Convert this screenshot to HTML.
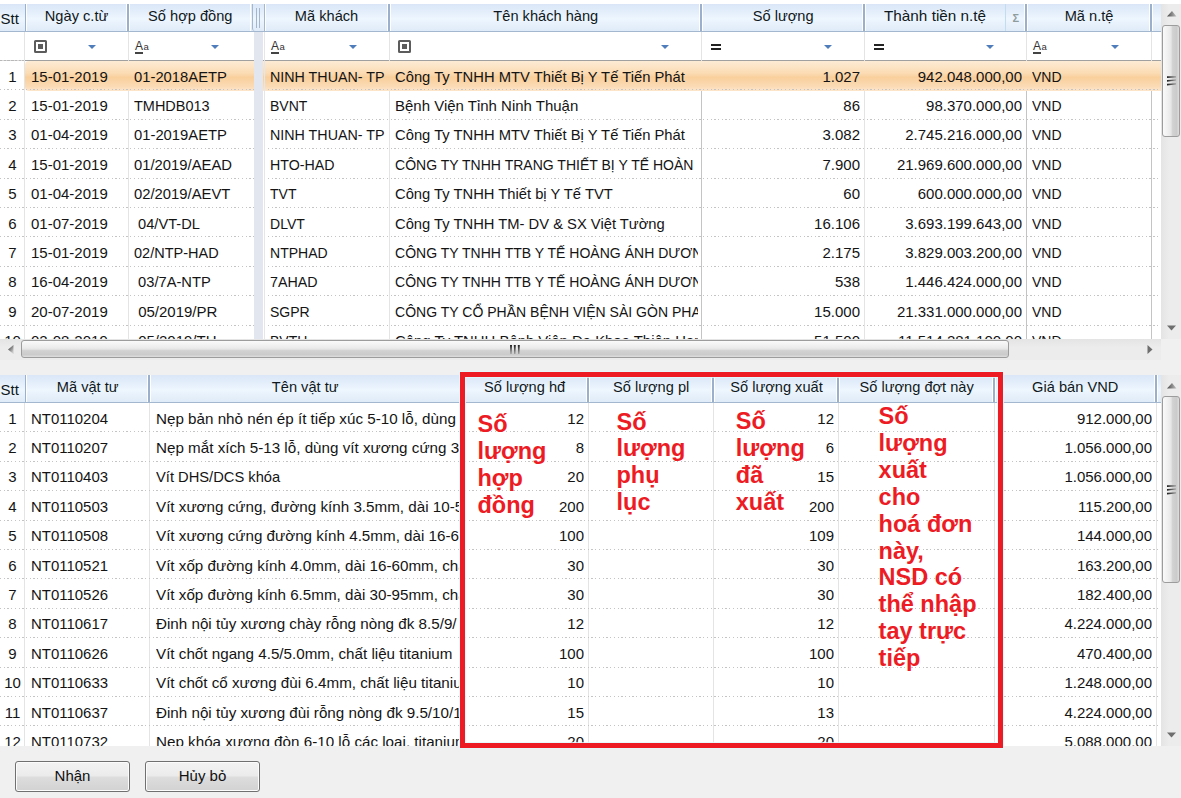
<!DOCTYPE html><html><head><meta charset='utf-8'><style>
*{margin:0;padding:0;box-sizing:border-box}
html,body{width:1181px;height:798px;overflow:hidden;background:#fff;font-family:"Liberation Sans",sans-serif}
.ab{position:absolute}
.hdr{position:absolute;background:linear-gradient(#dae6f7 0%,#e6f0fc 35%,#eef6fe 55%,#dfebf8 100%);}
.hb{position:absolute;height:1px;background:#a3b7cf}
.sep{position:absolute;width:2px;background:#9bb1cb}
.sepw{position:absolute;width:1px;background:#fff}
.ht{position:absolute;font-size:15px;color:#101820;white-space:nowrap;line-height:24px;text-align:center}
.cell{position:absolute;font-size:15px;color:#141414;white-space:pre;overflow:hidden;line-height:29.4px}
.vl{position:absolute;width:1px;background:#e4e4e4}
.dl{position:absolute;height:1px;background:repeating-linear-gradient(90deg,#c4c4c4 0 1.3px,transparent 1.3px 3.72px)}
.tri{position:absolute;width:0;height:0;border-left:4.5px solid transparent;border-right:4.5px solid transparent;border-top:4.5px solid #4f7cba}
.sb{position:absolute;background:linear-gradient(90deg,#e4e4e4,#ececec 40%,#ececec)}
.thumbv{position:absolute;border:1.4px solid #9c9c9c;border-radius:3px;background:linear-gradient(90deg,#fafafa 0%,#ececec 40%,#e6e6e6 50%,#d2d2d2 60%,#cbcbcb 85%,#dedede 100%)}
.thumbh{position:absolute;border:1.4px solid #9c9c9c;border-radius:3px;background:linear-gradient(#fafafa 0%,#ececec 40%,#e6e6e6 50%,#d2d2d2 60%,#cbcbcb 85%,#dedede 100%)}
.btn{position:absolute;border:1.4px solid #707070;border-radius:3px;background:linear-gradient(#f3f3f3 0%,#ebebeb 48%,#dddddd 52%,#d2d2d2 100%);box-shadow:inset 0 0 0 1px #fcfcfc;font-size:15px;color:#111;text-align:center;line-height:28px}
.ann{position:absolute;color:#ed1c24;font-weight:bold;font-size:23.5px;line-height:26.85px;white-space:pre}
</style></head><body>
<div class='ab' style='left:0;top:4px;width:1161px;height:335px;background:#fff;overflow:hidden'>
<div class='hdr' style='left:0;top:0;width:1161px;height:27px'></div>
<div class='hb' style='left:0;top:27px;width:1161px'></div>
<div class='ab' style='left:25px;top:56px;width:1136px;height:1px;background:#a0a0a0'></div>
<div class='dl' style='left:0;top:56px;width:25px;background:repeating-linear-gradient(90deg,#b8b8b8 0 2.5px,#d8d8d8 2.5px 3.72px)'></div>
<div class='vl' style='left:24px;top:28px;height:335px'></div>
<div class='vl' style='left:128px;top:28px;height:335px'></div>
<div class='vl' style='left:389px;top:28px;height:335px'></div>
<div class='vl' style='left:701px;top:28px;height:335px'></div>
<div class='vl' style='left:864px;top:28px;height:335px'></div>
<div class='vl' style='left:1026px;top:28px;height:335px'></div>
<div class='vl' style='left:1151px;top:28px;height:335px'></div>
<div class='ab' style='left:701px;top:57px;width:1.2px;height:279px;background:#c4c4c4'></div>
<div class='ab' style='left:1026px;top:57px;width:1.2px;height:279px;background:#c4c4c4'></div>
<div class='ab' style='left:1151px;top:57px;width:1.2px;height:279px;background:#c4c4c4'></div>
<div class='ab' style='left:25px;top:57.0px;width:1136px;height:29.9px;border-radius:4px 0 0 4px;background:linear-gradient(#fdebd5 0%,#fbdcb4 40%,#f9cf9c 55%,#fbdbb6 85%,#fde6cc 100%)'></div>
<div class='dl' style='left:0;top:85.4px;width:1161px'></div>
<div class='cell' style='left:0px;width:25px;text-align:center;top:57.5px;height:29.4px'>1</div>
<div class='cell' style='left:31px;width:94px;top:57.5px;height:29.4px'>15-01-2019</div>
<div class='cell' style='left:134px;width:117px;top:57.5px;height:29.4px'><span style='display:inline-block;transform:scaleX(0.986);transform-origin:left'>01-2018AETP</span></div>
<div class='cell' style='left:270px;width:116px;top:57.5px;height:29.4px'><span style='display:inline-block;transform:scaleX(0.952);transform-origin:left'>NINH THUAN- TP</span></div>
<div class='cell' style='left:395px;width:303px;top:57.5px;height:29.4px'><span style='display:inline-block;transform:scaleX(0.985);transform-origin:left'>Công Ty TNHH MTV Thiết Bị Y Tế Tiến Phát</span></div>
<div class='cell' style='left:702px;width:158px;text-align:right;top:57.5px;height:29.4px'>1.027</div>
<div class='cell' style='left:865px;width:157px;text-align:right;top:57.5px;height:29.4px'>942.048.000,00</div>
<div class='cell' style='left:1032px;width:116px;top:57.5px;height:29.4px'><span style='display:inline-block;transform:scaleX(0.935);transform-origin:left'>VND</span></div>
<div class='dl' style='left:0;top:114.8px;width:1161px'></div>
<div class='cell' style='left:0px;width:25px;text-align:center;top:86.9px;height:29.4px'>2</div>
<div class='cell' style='left:31px;width:94px;top:86.9px;height:29.4px'>15-01-2019</div>
<div class='cell' style='left:134px;width:117px;top:86.9px;height:29.4px'><span style='display:inline-block;transform:scaleX(0.965);transform-origin:left'>TMHDB013</span></div>
<div class='cell' style='left:270px;width:116px;top:86.9px;height:29.4px'><span style='display:inline-block;transform:scaleX(0.935);transform-origin:left'>BVNT</span></div>
<div class='cell' style='left:395px;width:303px;top:86.9px;height:29.4px'><span style='display:inline-block;transform:scaleX(0.999);transform-origin:left'>Bệnh Viện Tỉnh Ninh Thuận</span></div>
<div class='cell' style='left:702px;width:158px;text-align:right;top:86.9px;height:29.4px'>86</div>
<div class='cell' style='left:865px;width:157px;text-align:right;top:86.9px;height:29.4px'>98.370.000,00</div>
<div class='cell' style='left:1032px;width:116px;top:86.9px;height:29.4px'><span style='display:inline-block;transform:scaleX(0.935);transform-origin:left'>VND</span></div>
<div class='dl' style='left:0;top:144.2px;width:1161px'></div>
<div class='cell' style='left:0px;width:25px;text-align:center;top:116.3px;height:29.4px'>3</div>
<div class='cell' style='left:31px;width:94px;top:116.3px;height:29.4px'>01-04-2019</div>
<div class='cell' style='left:134px;width:117px;top:116.3px;height:29.4px'><span style='display:inline-block;transform:scaleX(0.986);transform-origin:left'>01-2019AETP</span></div>
<div class='cell' style='left:270px;width:116px;top:116.3px;height:29.4px'><span style='display:inline-block;transform:scaleX(0.952);transform-origin:left'>NINH THUAN- TP</span></div>
<div class='cell' style='left:395px;width:303px;top:116.3px;height:29.4px'><span style='display:inline-block;transform:scaleX(0.985);transform-origin:left'>Công Ty TNHH MTV Thiết Bị Y Tế Tiến Phát</span></div>
<div class='cell' style='left:702px;width:158px;text-align:right;top:116.3px;height:29.4px'>3.082</div>
<div class='cell' style='left:865px;width:157px;text-align:right;top:116.3px;height:29.4px'>2.745.216.000,00</div>
<div class='cell' style='left:1032px;width:116px;top:116.3px;height:29.4px'><span style='display:inline-block;transform:scaleX(0.935);transform-origin:left'>VND</span></div>
<div class='dl' style='left:0;top:173.6px;width:1161px'></div>
<div class='cell' style='left:0px;width:25px;text-align:center;top:145.7px;height:29.4px'>4</div>
<div class='cell' style='left:31px;width:94px;top:145.7px;height:29.4px'>15-01-2019</div>
<div class='cell' style='left:134px;width:117px;top:145.7px;height:29.4px'><span style='display:inline-block;transform:scaleX(0.988);transform-origin:left'>01/2019/AEAD</span></div>
<div class='cell' style='left:270px;width:116px;top:145.7px;height:29.4px'><span style='display:inline-block;transform:scaleX(0.946);transform-origin:left'>HTO-HAD</span></div>
<div class='cell' style='left:395px;width:303px;top:145.7px;height:29.4px'><span style='display:inline-block;transform:scaleX(0.935);transform-origin:left'>CÔNG TY TNHH TRANG THIẾT BỊ Y TẾ HOÀN</span></div>
<div class='cell' style='left:702px;width:158px;text-align:right;top:145.7px;height:29.4px'>7.900</div>
<div class='cell' style='left:865px;width:157px;text-align:right;top:145.7px;height:29.4px'>21.969.600.000,00</div>
<div class='cell' style='left:1032px;width:116px;top:145.7px;height:29.4px'><span style='display:inline-block;transform:scaleX(0.935);transform-origin:left'>VND</span></div>
<div class='dl' style='left:0;top:203.0px;width:1161px'></div>
<div class='cell' style='left:0px;width:25px;text-align:center;top:175.1px;height:29.4px'>5</div>
<div class='cell' style='left:31px;width:94px;top:175.1px;height:29.4px'>01-04-2019</div>
<div class='cell' style='left:134px;width:117px;top:175.1px;height:29.4px'><span style='display:inline-block;transform:scaleX(0.988);transform-origin:left'>02/2019/AEVT</span></div>
<div class='cell' style='left:270px;width:116px;top:175.1px;height:29.4px'><span style='display:inline-block;transform:scaleX(0.935);transform-origin:left'>TVT</span></div>
<div class='cell' style='left:395px;width:303px;top:175.1px;height:29.4px'><span style='display:inline-block;transform:scaleX(0.983);transform-origin:left'>Công Ty TNHH Thiết bị Y Tế TVT</span></div>
<div class='cell' style='left:702px;width:158px;text-align:right;top:175.1px;height:29.4px'>60</div>
<div class='cell' style='left:865px;width:157px;text-align:right;top:175.1px;height:29.4px'>600.000.000,00</div>
<div class='cell' style='left:1032px;width:116px;top:175.1px;height:29.4px'><span style='display:inline-block;transform:scaleX(0.935);transform-origin:left'>VND</span></div>
<div class='dl' style='left:0;top:232.4px;width:1161px'></div>
<div class='cell' style='left:0px;width:25px;text-align:center;top:204.5px;height:29.4px'>6</div>
<div class='cell' style='left:31px;width:94px;top:204.5px;height:29.4px'>01-07-2019</div>
<div class='cell' style='left:134px;width:117px;top:204.5px;height:29.4px'><span style='display:inline-block;transform:scaleX(0.975);transform-origin:left'> 04/VT-DL</span></div>
<div class='cell' style='left:270px;width:116px;top:204.5px;height:29.4px'><span style='display:inline-block;transform:scaleX(0.935);transform-origin:left'>DLVT</span></div>
<div class='cell' style='left:395px;width:303px;top:204.5px;height:29.4px'><span style='display:inline-block;transform:scaleX(0.983);transform-origin:left'>Công Ty TNHH TM- DV &amp; SX Việt Tường</span></div>
<div class='cell' style='left:702px;width:158px;text-align:right;top:204.5px;height:29.4px'>16.106</div>
<div class='cell' style='left:865px;width:157px;text-align:right;top:204.5px;height:29.4px'>3.693.199.643,00</div>
<div class='cell' style='left:1032px;width:116px;top:204.5px;height:29.4px'><span style='display:inline-block;transform:scaleX(0.935);transform-origin:left'>VND</span></div>
<div class='dl' style='left:0;top:261.8px;width:1161px'></div>
<div class='cell' style='left:0px;width:25px;text-align:center;top:233.9px;height:29.4px'>7</div>
<div class='cell' style='left:31px;width:94px;top:233.9px;height:29.4px'>15-01-2019</div>
<div class='cell' style='left:134px;width:117px;top:233.9px;height:29.4px'><span style='display:inline-block;transform:scaleX(0.967);transform-origin:left'>02/NTP-HAD</span></div>
<div class='cell' style='left:270px;width:116px;top:233.9px;height:29.4px'><span style='display:inline-block;transform:scaleX(0.935);transform-origin:left'>NTPHAD</span></div>
<div class='cell' style='left:395px;width:303px;top:233.9px;height:29.4px'><span style='display:inline-block;transform:scaleX(0.935);transform-origin:left'>CÔNG TY TNHH TTB Y TẾ HOÀNG ÁNH DƯƠNG</span></div>
<div class='cell' style='left:702px;width:158px;text-align:right;top:233.9px;height:29.4px'>2.175</div>
<div class='cell' style='left:865px;width:157px;text-align:right;top:233.9px;height:29.4px'>3.829.003.200,00</div>
<div class='cell' style='left:1032px;width:116px;top:233.9px;height:29.4px'><span style='display:inline-block;transform:scaleX(0.935);transform-origin:left'>VND</span></div>
<div class='dl' style='left:0;top:291.2px;width:1161px'></div>
<div class='cell' style='left:0px;width:25px;text-align:center;top:263.3px;height:29.4px'>8</div>
<div class='cell' style='left:31px;width:94px;top:263.3px;height:29.4px'>16-04-2019</div>
<div class='cell' style='left:134px;width:117px;top:263.3px;height:29.4px'><span style='display:inline-block;transform:scaleX(0.979);transform-origin:left'> 03/7A-NTP</span></div>
<div class='cell' style='left:270px;width:116px;top:263.3px;height:29.4px'><span style='display:inline-block;transform:scaleX(0.951);transform-origin:left'>7AHAD</span></div>
<div class='cell' style='left:395px;width:303px;top:263.3px;height:29.4px'><span style='display:inline-block;transform:scaleX(0.935);transform-origin:left'>CÔNG TY TNHH TTB Y TẾ HOÀNG ÁNH DƯƠNG</span></div>
<div class='cell' style='left:702px;width:158px;text-align:right;top:263.3px;height:29.4px'>538</div>
<div class='cell' style='left:865px;width:157px;text-align:right;top:263.3px;height:29.4px'>1.446.424.000,00</div>
<div class='cell' style='left:1032px;width:116px;top:263.3px;height:29.4px'><span style='display:inline-block;transform:scaleX(0.935);transform-origin:left'>VND</span></div>
<div class='dl' style='left:0;top:320.6px;width:1161px'></div>
<div class='cell' style='left:0px;width:25px;text-align:center;top:292.7px;height:29.4px'>9</div>
<div class='cell' style='left:31px;width:94px;top:292.7px;height:29.4px'>20-07-2019</div>
<div class='cell' style='left:134px;width:117px;top:292.7px;height:29.4px'><span style='display:inline-block;transform:scaleX(0.999);transform-origin:left'> 05/2019/PR</span></div>
<div class='cell' style='left:270px;width:116px;top:292.7px;height:29.4px'><span style='display:inline-block;transform:scaleX(0.935);transform-origin:left'>SGPR</span></div>
<div class='cell' style='left:395px;width:303px;top:292.7px;height:29.4px'><span style='display:inline-block;transform:scaleX(0.935);transform-origin:left'>CÔNG TY CỔ PHẦN BỆNH VIỆN SÀI GÒN PHA</span></div>
<div class='cell' style='left:702px;width:158px;text-align:right;top:292.7px;height:29.4px'>15.000</div>
<div class='cell' style='left:865px;width:157px;text-align:right;top:292.7px;height:29.4px'>21.331.000.000,00</div>
<div class='cell' style='left:1032px;width:116px;top:292.7px;height:29.4px'><span style='display:inline-block;transform:scaleX(0.935);transform-origin:left'>VND</span></div>
<div class='dl' style='left:0;top:350.0px;width:1161px'></div>
<div class='cell' style='left:0px;width:25px;text-align:center;top:322.1px;height:29.4px'>10</div>
<div class='cell' style='left:31px;width:94px;top:322.1px;height:29.4px'>02-08-2019</div>
<div class='cell' style='left:134px;width:117px;top:322.1px;height:29.4px'><span style='display:inline-block;transform:scaleX(0.999);transform-origin:left'> 05/2019/TH</span></div>
<div class='cell' style='left:270px;width:116px;top:322.1px;height:29.4px'><span style='display:inline-block;transform:scaleX(0.935);transform-origin:left'>BVTH</span></div>
<div class='cell' style='left:395px;width:303px;top:322.1px;height:29.4px'><span style='display:inline-block;transform:scaleX(0.992);transform-origin:left'>Công Ty TNHH Bệnh Viện Đa Khoa Thiện Hạnh</span></div>
<div class='cell' style='left:702px;width:158px;text-align:right;top:322.1px;height:29.4px'>51.500</div>
<div class='cell' style='left:865px;width:157px;text-align:right;top:322.1px;height:29.4px'>11.514.281.100,00</div>
<div class='cell' style='left:1032px;width:116px;top:322.1px;height:29.4px'><span style='display:inline-block;transform:scaleX(0.935);transform-origin:left'>VND</span></div>
<div class='ab' style='left:254px;top:28px;width:9px;height:335px;background:#e2e6ee'></div>
<div class='ab' style='left:264px;top:28px;width:1px;height:335px;background:#e6e6e6'></div>
<div class='ht' style='left:0.5px;top:2.5px;text-align:left'>Stt</div>
<div class='sep' style='left:24.5px;width:1.5px;top:0;height:27px'></div>
<div class='sepw' style='left:26px;top:0;height:27px'></div>
<div class='ht' style='left:26px;width:102px;top:0'><span style='display:inline-block;transform:scaleX(0.975)'>Ngày c.từ</span></div>
<div class='sepw' style='left:126px;top:0;height:27px'></div>
<div class='sep' style='left:127px;top:0;height:27px'></div>
<div class='sepw' style='left:129px;top:0;height:27px'></div>
<div class='ht' style='left:129px;width:122px;top:0'><span style='display:inline-block;transform:scaleX(0.975)'>Số hợp đồng</span></div>
<div class='ht' style='left:265px;width:124px;top:0'><span style='display:inline-block;transform:scaleX(0.975)'>Mã khách</span></div>
<div class='sepw' style='left:387px;top:0;height:27px'></div>
<div class='sep' style='left:388px;top:0;height:27px'></div>
<div class='sepw' style='left:390px;top:0;height:27px'></div>
<div class='ht' style='left:390px;width:311px;top:0'><span style='display:inline-block;transform:scaleX(0.975)'>Tên khách hàng</span></div>
<div class='sepw' style='left:699px;top:0;height:27px'></div>
<div class='sep' style='left:700px;top:0;height:27px'></div>
<div class='sepw' style='left:702px;top:0;height:27px'></div>
<div class='ht' style='left:702px;width:162px;top:0'><span style='display:inline-block;transform:scaleX(0.975)'>Số lượng</span></div>
<div class='sepw' style='left:862px;top:0;height:27px'></div>
<div class='sep' style='left:863px;top:0;height:27px'></div>
<div class='sepw' style='left:865px;top:0;height:27px'></div>
<div class='ht' style='left:865px;width:140px;top:0'><span style='display:inline-block;transform:scaleX(1.02)'>Thành tiền n.tệ</span></div>
<div class='ab' style='left:1005px;top:0;width:1px;height:27px;background:#c4dcef'></div>
<div class='ab' style='left:1012.5px;top:0;font-size:11px;font-weight:bold;line-height:29px;color:#8f9c9e'>&#931;</div>
<div class='sepw' style='left:1024px;top:0;height:27px'></div>
<div class='sep' style='left:1025px;top:0;height:27px'></div>
<div class='sepw' style='left:1027px;top:0;height:27px'></div>
<div class='ht' style='left:1027px;width:124px;top:0'><span style='display:inline-block;transform:scaleX(0.975)'>Mã n.tệ</span></div>
<div class='sepw' style='left:1149px;top:0;height:27px'></div>
<div class='sep' style='left:1150px;top:0;height:27px'></div>
<div class='sepw' style='left:1152px;top:0;height:27px'></div>
<div class='sepw' style='left:250px;top:0;height:27px'></div>
<div class='ab' style='left:251.5px;top:0;width:13.5px;height:27px;border-left:1.3px solid #a3b7cf;border-right:1.3px solid #a3b7cf;border-radius:0 0 0 3px;background:linear-gradient(#dae6f7 0%,#e6f0fc 35%,#eef6fe 55%,#dfebf8 100%)'></div>
<div class='ab' style='left:255.8px;top:4px;width:1.6px;height:19.5px;background:#a3b6cc'></div>
<div class='ab' style='left:258.8px;top:4px;width:1.6px;height:19.5px;background:#a3b6cc'></div>
<div class='sepw' style='left:265.3px;top:0;height:27px'></div>
</div>
<div class='ab' style='left:34px;top:40px;width:13px;height:13px;border:2px solid #5c5c5c;border-radius:1.5px'><div class='ab' style='left:2px;top:2px;width:5px;height:5px;background:#5c5c5c'></div></div>
<div class='tri' style='left:88px;top:45px'></div>
<div class='ab' style='left:135px;top:38.5px;font-size:12px;line-height:14px;color:#333;letter-spacing:0.5px'>A<span style='font-size:9.5px'>a</span></div>
<div class='ab' style='left:135px;top:52px;width:8px;height:1.5px;background:#444'></div>
<div class='tri' style='left:211px;top:45px'></div>
<div class='ab' style='left:271px;top:38.5px;font-size:12px;line-height:14px;color:#333;letter-spacing:0.5px'>A<span style='font-size:9.5px'>a</span></div>
<div class='ab' style='left:271px;top:52px;width:8px;height:1.5px;background:#444'></div>
<div class='tri' style='left:349px;top:45px'></div>
<div class='ab' style='left:398px;top:40px;width:13px;height:13px;border:2px solid #5c5c5c;border-radius:1.5px'><div class='ab' style='left:2px;top:2px;width:5px;height:5px;background:#5c5c5c'></div></div>
<div class='tri' style='left:661px;top:45px'></div>
<div class='ab' style='left:711px;top:43.5px;width:10px;height:2px;background:#222'></div>
<div class='ab' style='left:711px;top:47.5px;width:10px;height:2px;background:#222'></div>
<div class='tri' style='left:824px;top:45px'></div>
<div class='ab' style='left:874px;top:43.5px;width:10px;height:2px;background:#222'></div>
<div class='ab' style='left:874px;top:47.5px;width:10px;height:2px;background:#222'></div>
<div class='tri' style='left:986px;top:45px'></div>
<div class='ab' style='left:1033px;top:38.5px;font-size:12px;line-height:14px;color:#333;letter-spacing:0.5px'>A<span style='font-size:9.5px'>a</span></div>
<div class='ab' style='left:1033px;top:52px;width:8px;height:1.5px;background:#444'></div>
<div class='tri' style='left:1111px;top:45px'></div>
<div class='sb' style='left:1161px;top:4px;width:20px;height:335px'></div>
<svg class='ab' style='left:1167px;top:11px' width='10' height='6'><defs><linearGradient id='ua1' x1='0' x2='1'><stop offset='0' stop-color='#4a4a4a'/><stop offset='1' stop-color='#c0c0c0'/></linearGradient></defs><path d='M0 5.5 L5 0 L9.5 5.5 Z' fill='url(#ua1)'/></svg>
<div class='thumbv' style='left:1162px;top:25px;width:18px;height:112px'></div>
<svg class='ab' style='left:1166px;top:75px' width='11' height='11'><defs><linearGradient id='gv75' x1='0' x2='1'><stop offset='0' stop-color='#1e1e1e'/><stop offset='1' stop-color='#9a9a9a'/></linearGradient></defs><path d='M1 1.2 L10 1.2 L10 2.4 L1 3 Z M1 5 L10 4.4 L10 5.6 L1 6.8 Z M1 8.8 L10 8.2 L10 9.4 L1 10.6 Z' fill='url(#gv75)'/></svg>
<svg class='ab' style='left:1167px;top:325px' width='10' height='6'><path d='M0 0.5 L9 0.5 L4.5 5.5 Z' fill='#6e6e6e'/></svg>
<div class='ab' style='left:0;top:339px;width:1181px;height:36px;background:#f0f0f0'></div>
<div class='ab' style='left:0;top:339px;width:1161px;height:21px;background:linear-gradient(#e4e4e4,#ececec 40%,#ececec)'></div>
<svg class='ab' style='left:7.5px;top:345px' width='6' height='10'><defs><linearGradient id='la1' x1='0' x2='0.6' y1='0.3' y2='1'><stop offset='0' stop-color='#4a4a4a'/><stop offset='1' stop-color='#c8c8c8'/></linearGradient></defs><path d='M0 4.5 L5.5 0 L5.5 9 Z' fill='url(#la1)'/></svg>
<div class='thumbh' style='left:21px;top:340px;width:988px;height:18px'></div>
<svg class='ab' style='left:509px;top:344px' width='11' height='11'><defs><linearGradient id='gh' x1='0' x2='0' y1='0' y2='1'><stop offset='0' stop-color='#1e1e1e'/><stop offset='1' stop-color='#9a9a9a'/></linearGradient></defs><path d='M1 1 L3 1 L2.6 10 L1.4 10 Z M4.8 1 L6.8 1 L6.4 10 L5.2 10 Z M8.8 1 L10.8 1 L10.4 10 L9.2 10 Z' fill='url(#gh)'/></svg>
<svg class='ab' style='left:1147px;top:345px' width='6' height='10'><path d='M0.5 0 L5.5 4.5 L0.5 9 Z' fill='#6e6e6e'/></svg>
<div class='ab' style='left:0;top:375px;width:1161px;height:371px;background:#fff;overflow:hidden'>
<div class='hdr' style='left:0;top:0;width:1161px;height:27px'></div>
<div class='hb' style='left:0;top:27px;width:1161px'></div>
<div class='vl' style='left:24px;top:28px;height:371px'></div>
<div class='vl' style='left:149px;top:28px;height:371px'></div>
<div class='vl' style='left:461px;top:28px;height:371px'></div>
<div class='vl' style='left:588px;top:28px;height:371px'></div>
<div class='vl' style='left:713px;top:28px;height:371px'></div>
<div class='vl' style='left:838px;top:28px;height:371px'></div>
<div class='vl' style='left:994px;top:28px;height:371px'></div>
<div class='vl' style='left:1156px;top:28px;height:371px'></div>
<div class='dl' style='left:0;top:56.4px;width:1161px'></div>
<div class='cell' style='left:0px;width:25px;text-align:center;top:28.5px;height:29.4px'>1</div>
<div class='cell' style='left:31px;width:115px;top:28.5px;height:29.4px'><span style='display:inline-block;transform:scaleX(0.997);transform-origin:left'>NT0110204</span></div>
<div class='cell' style='left:156px;width:303px;top:28.5px;height:29.4px'><span style='display:inline-block;transform:scaleX(1.013);transform-origin:left'>Nẹp bản nhỏ nén ép ít tiếp xúc 5-10 lỗ, dùng</span></div>
<div class='cell' style='left:462px;width:122px;text-align:right;top:28.5px;height:29.4px'>12</div>
<div class='cell' style='left:714px;width:120px;text-align:right;top:28.5px;height:29.4px'>12</div>
<div class='cell' style='left:995px;width:157px;text-align:right;top:28.5px;height:29.4px'>912.000,00</div>
<div class='dl' style='left:0;top:85.8px;width:1161px'></div>
<div class='cell' style='left:0px;width:25px;text-align:center;top:57.9px;height:29.4px'>2</div>
<div class='cell' style='left:31px;width:115px;top:57.9px;height:29.4px'><span style='display:inline-block;transform:scaleX(0.997);transform-origin:left'>NT0110207</span></div>
<div class='cell' style='left:156px;width:303px;top:57.9px;height:29.4px'><span style='display:inline-block;transform:scaleX(1.013);transform-origin:left'>Nẹp mắt xích 5-13 lỗ, dùng vít xương cứng 3.</span></div>
<div class='cell' style='left:462px;width:122px;text-align:right;top:57.9px;height:29.4px'>8</div>
<div class='cell' style='left:714px;width:120px;text-align:right;top:57.9px;height:29.4px'>6</div>
<div class='cell' style='left:995px;width:157px;text-align:right;top:57.9px;height:29.4px'>1.056.000,00</div>
<div class='dl' style='left:0;top:115.2px;width:1161px'></div>
<div class='cell' style='left:0px;width:25px;text-align:center;top:87.3px;height:29.4px'>3</div>
<div class='cell' style='left:31px;width:115px;top:87.3px;height:29.4px'><span style='display:inline-block;transform:scaleX(0.997);transform-origin:left'>NT0110403</span></div>
<div class='cell' style='left:156px;width:303px;top:87.3px;height:29.4px'><span style='display:inline-block;transform:scaleX(0.98);transform-origin:left'>Vít DHS/DCS khóa</span></div>
<div class='cell' style='left:462px;width:122px;text-align:right;top:87.3px;height:29.4px'>20</div>
<div class='cell' style='left:714px;width:120px;text-align:right;top:87.3px;height:29.4px'>15</div>
<div class='cell' style='left:995px;width:157px;text-align:right;top:87.3px;height:29.4px'>1.056.000,00</div>
<div class='dl' style='left:0;top:144.6px;width:1161px'></div>
<div class='cell' style='left:0px;width:25px;text-align:center;top:116.7px;height:29.4px'>4</div>
<div class='cell' style='left:31px;width:115px;top:116.7px;height:29.4px'><span style='display:inline-block;transform:scaleX(0.997);transform-origin:left'>NT0110503</span></div>
<div class='cell' style='left:156px;width:303px;top:116.7px;height:29.4px'><span style='display:inline-block;transform:scaleX(1.013);transform-origin:left'>Vít xương cứng, đường kính 3.5mm, dài 10-55mm</span></div>
<div class='cell' style='left:462px;width:122px;text-align:right;top:116.7px;height:29.4px'>200</div>
<div class='cell' style='left:714px;width:120px;text-align:right;top:116.7px;height:29.4px'>200</div>
<div class='cell' style='left:995px;width:157px;text-align:right;top:116.7px;height:29.4px'>115.200,00</div>
<div class='dl' style='left:0;top:174.0px;width:1161px'></div>
<div class='cell' style='left:0px;width:25px;text-align:center;top:146.1px;height:29.4px'>5</div>
<div class='cell' style='left:31px;width:115px;top:146.1px;height:29.4px'><span style='display:inline-block;transform:scaleX(0.997);transform-origin:left'>NT0110508</span></div>
<div class='cell' style='left:156px;width:303px;top:146.1px;height:29.4px'><span style='display:inline-block;transform:scaleX(1.013);transform-origin:left'>Vít xương cứng đường kính 4.5mm, dài 16-60mm</span></div>
<div class='cell' style='left:462px;width:122px;text-align:right;top:146.1px;height:29.4px'>100</div>
<div class='cell' style='left:714px;width:120px;text-align:right;top:146.1px;height:29.4px'>109</div>
<div class='cell' style='left:995px;width:157px;text-align:right;top:146.1px;height:29.4px'>144.000,00</div>
<div class='dl' style='left:0;top:203.4px;width:1161px'></div>
<div class='cell' style='left:0px;width:25px;text-align:center;top:175.5px;height:29.4px'>6</div>
<div class='cell' style='left:31px;width:115px;top:175.5px;height:29.4px'><span style='display:inline-block;transform:scaleX(0.997);transform-origin:left'>NT0110521</span></div>
<div class='cell' style='left:156px;width:303px;top:175.5px;height:29.4px'><span style='display:inline-block;transform:scaleX(1.013);transform-origin:left'>Vít xốp đường kính 4.0mm, dài 16-60mm, chất</span></div>
<div class='cell' style='left:462px;width:122px;text-align:right;top:175.5px;height:29.4px'>30</div>
<div class='cell' style='left:714px;width:120px;text-align:right;top:175.5px;height:29.4px'>30</div>
<div class='cell' style='left:995px;width:157px;text-align:right;top:175.5px;height:29.4px'>163.200,00</div>
<div class='dl' style='left:0;top:232.8px;width:1161px'></div>
<div class='cell' style='left:0px;width:25px;text-align:center;top:204.9px;height:29.4px'>7</div>
<div class='cell' style='left:31px;width:115px;top:204.9px;height:29.4px'><span style='display:inline-block;transform:scaleX(0.997);transform-origin:left'>NT0110526</span></div>
<div class='cell' style='left:156px;width:303px;top:204.9px;height:29.4px'><span style='display:inline-block;transform:scaleX(1.013);transform-origin:left'>Vít xốp đường kính 6.5mm, dài 30-95mm, chất</span></div>
<div class='cell' style='left:462px;width:122px;text-align:right;top:204.9px;height:29.4px'>30</div>
<div class='cell' style='left:714px;width:120px;text-align:right;top:204.9px;height:29.4px'>30</div>
<div class='cell' style='left:995px;width:157px;text-align:right;top:204.9px;height:29.4px'>182.400,00</div>
<div class='dl' style='left:0;top:262.2px;width:1161px'></div>
<div class='cell' style='left:0px;width:25px;text-align:center;top:234.3px;height:29.4px'>8</div>
<div class='cell' style='left:31px;width:115px;top:234.3px;height:29.4px'><span style='display:inline-block;transform:scaleX(0.997);transform-origin:left'>NT0110617</span></div>
<div class='cell' style='left:156px;width:303px;top:234.3px;height:29.4px'><span style='display:inline-block;transform:scaleX(1.013);transform-origin:left'>Đinh nội tủy xương chày rỗng nòng đk 8.5/9/</span></div>
<div class='cell' style='left:462px;width:122px;text-align:right;top:234.3px;height:29.4px'>12</div>
<div class='cell' style='left:714px;width:120px;text-align:right;top:234.3px;height:29.4px'>12</div>
<div class='cell' style='left:995px;width:157px;text-align:right;top:234.3px;height:29.4px'>4.224.000,00</div>
<div class='dl' style='left:0;top:291.6px;width:1161px'></div>
<div class='cell' style='left:0px;width:25px;text-align:center;top:263.7px;height:29.4px'>9</div>
<div class='cell' style='left:31px;width:115px;top:263.7px;height:29.4px'><span style='display:inline-block;transform:scaleX(0.997);transform-origin:left'>NT0110626</span></div>
<div class='cell' style='left:156px;width:303px;top:263.7px;height:29.4px'><span style='display:inline-block;transform:scaleX(1.013);transform-origin:left'>Vít chốt ngang 4.5/5.0mm, chất liệu titanium</span></div>
<div class='cell' style='left:462px;width:122px;text-align:right;top:263.7px;height:29.4px'>100</div>
<div class='cell' style='left:714px;width:120px;text-align:right;top:263.7px;height:29.4px'>100</div>
<div class='cell' style='left:995px;width:157px;text-align:right;top:263.7px;height:29.4px'>470.400,00</div>
<div class='dl' style='left:0;top:321.0px;width:1161px'></div>
<div class='cell' style='left:0px;width:25px;text-align:center;top:293.1px;height:29.4px'>10</div>
<div class='cell' style='left:31px;width:115px;top:293.1px;height:29.4px'><span style='display:inline-block;transform:scaleX(0.997);transform-origin:left'>NT0110633</span></div>
<div class='cell' style='left:156px;width:303px;top:293.1px;height:29.4px'><span style='display:inline-block;transform:scaleX(1.013);transform-origin:left'>Vít chốt cổ xương đùi 6.4mm, chất liệu titanium</span></div>
<div class='cell' style='left:462px;width:122px;text-align:right;top:293.1px;height:29.4px'>10</div>
<div class='cell' style='left:714px;width:120px;text-align:right;top:293.1px;height:29.4px'>10</div>
<div class='cell' style='left:995px;width:157px;text-align:right;top:293.1px;height:29.4px'>1.248.000,00</div>
<div class='dl' style='left:0;top:350.4px;width:1161px'></div>
<div class='cell' style='left:0px;width:25px;text-align:center;top:322.5px;height:29.4px'>11</div>
<div class='cell' style='left:31px;width:115px;top:322.5px;height:29.4px'><span style='display:inline-block;transform:scaleX(0.997);transform-origin:left'>NT0110637</span></div>
<div class='cell' style='left:156px;width:303px;top:322.5px;height:29.4px'><span style='display:inline-block;transform:scaleX(1.013);transform-origin:left'>Đinh nội tủy xương đùi rỗng nòng đk 9.5/10/1</span></div>
<div class='cell' style='left:462px;width:122px;text-align:right;top:322.5px;height:29.4px'>15</div>
<div class='cell' style='left:714px;width:120px;text-align:right;top:322.5px;height:29.4px'>13</div>
<div class='cell' style='left:995px;width:157px;text-align:right;top:322.5px;height:29.4px'>4.224.000,00</div>
<div class='dl' style='left:0;top:379.8px;width:1161px'></div>
<div class='cell' style='left:0px;width:25px;text-align:center;top:351.9px;height:29.4px'>12</div>
<div class='cell' style='left:31px;width:115px;top:351.9px;height:29.4px'><span style='display:inline-block;transform:scaleX(0.997);transform-origin:left'>NT0110732</span></div>
<div class='cell' style='left:156px;width:303px;top:351.9px;height:29.4px'><span style='display:inline-block;transform:scaleX(1.013);transform-origin:left'>Nẹp khóa xương đòn 6-10 lỗ các loại, titanium</span></div>
<div class='cell' style='left:462px;width:122px;text-align:right;top:351.9px;height:29.4px'>20</div>
<div class='cell' style='left:714px;width:120px;text-align:right;top:351.9px;height:29.4px'>20</div>
<div class='cell' style='left:995px;width:157px;text-align:right;top:351.9px;height:29.4px'>5.088.000,00</div>
<div class='ht' style='left:0.5px;top:2.5px;text-align:left'>Stt</div>
<div class='sep' style='left:24.5px;width:1.5px;top:0;height:27px'></div>
<div class='sepw' style='left:26px;top:0;height:27px'></div>
<div class='ht' style='left:26px;width:123px;top:0'><span style='display:inline-block;transform:scaleX(0.975)'>Mã vật tư</span></div>
<div class='sepw' style='left:147px;top:0;height:27px'></div>
<div class='sep' style='left:148px;top:0;height:27px'></div>
<div class='sepw' style='left:150px;top:0;height:27px'></div>
<div class='ht' style='left:150px;width:311px;top:0'><span style='display:inline-block;transform:scaleX(0.975)'>Tên vật tư</span></div>
<div class='sepw' style='left:459px;top:0;height:27px'></div>
<div class='sep' style='left:460px;top:0;height:27px'></div>
<div class='sepw' style='left:462px;top:0;height:27px'></div>
<div class='ht' style='left:462px;width:126px;top:0'><span style='display:inline-block;transform:scaleX(0.975)'>Số lượng hđ</span></div>
<div class='sepw' style='left:586px;top:0;height:27px'></div>
<div class='sep' style='left:587px;top:0;height:27px'></div>
<div class='sepw' style='left:589px;top:0;height:27px'></div>
<div class='ht' style='left:589px;width:124px;top:0'><span style='display:inline-block;transform:scaleX(0.975)'>Số lượng pl</span></div>
<div class='sepw' style='left:711px;top:0;height:27px'></div>
<div class='sep' style='left:712px;top:0;height:27px'></div>
<div class='sepw' style='left:714px;top:0;height:27px'></div>
<div class='ht' style='left:714px;width:124px;top:0'><span style='display:inline-block;transform:scaleX(0.975)'>Số lượng xuất</span></div>
<div class='sepw' style='left:836px;top:0;height:27px'></div>
<div class='sep' style='left:837px;top:0;height:27px'></div>
<div class='sepw' style='left:839px;top:0;height:27px'></div>
<div class='ht' style='left:839px;width:155px;top:0'><span style='display:inline-block;transform:scaleX(0.975)'>Số lượng đợt này</span></div>
<div class='sepw' style='left:992px;top:0;height:27px'></div>
<div class='sep' style='left:993px;top:0;height:27px'></div>
<div class='sepw' style='left:995px;top:0;height:27px'></div>
<div class='ht' style='left:995px;width:161px;top:0'><span style='display:inline-block;transform:scaleX(0.975)'>Giá bán VND</span></div>
<div class='sepw' style='left:1154px;top:0;height:27px'></div>
<div class='sep' style='left:1155px;top:0;height:27px'></div>
<div class='sepw' style='left:1157px;top:0;height:27px'></div>
</div>
<div class='sb' style='left:1161px;top:375px;width:20px;height:371px'></div>
<svg class='ab' style='left:1167px;top:383px' width='10' height='6'><defs><linearGradient id='ua2' x1='0' x2='1'><stop offset='0' stop-color='#4a4a4a'/><stop offset='1' stop-color='#c0c0c0'/></linearGradient></defs><path d='M0 5.5 L5 0 L9.5 5.5 Z' fill='url(#ua2)'/></svg>
<div class='thumbv' style='left:1162px;top:396px;width:18px;height:187px'></div>
<svg class='ab' style='left:1166px;top:484px' width='11' height='11'><defs><linearGradient id='gv484' x1='0' x2='1'><stop offset='0' stop-color='#1e1e1e'/><stop offset='1' stop-color='#9a9a9a'/></linearGradient></defs><path d='M1 1.2 L10 1.2 L10 2.4 L1 3 Z M1 5 L10 4.4 L10 5.6 L1 6.8 Z M1 8.8 L10 8.2 L10 9.4 L1 10.6 Z' fill='url(#gv484)'/></svg>
<svg class='ab' style='left:1167px;top:731.5px' width='10' height='6'><path d='M0 0.5 L9 0.5 L4.5 5.5 Z' fill='#6e6e6e'/></svg>
<div class='ab' style='left:0;top:746px;width:1181px;height:52px;background:#f0f0f0'></div>
<div class='btn' style='left:15px;top:761px;width:115px;height:31px'>Nhận</div>
<div class='btn' style='left:145px;top:761px;width:115px;height:31px'>Hủy bỏ</div>
<div class='ab' style='left:460px;top:372px;width:543px;height:376px;border:5px solid #ed1c24;box-shadow:0 0 0 1px rgba(225,250,255,0.8),inset 0 0 0 1px rgba(225,250,255,0.8)'></div>
<div class='ann' style='left:477.5px;top:411px'>Số
lượng
hợp
đồng</div>
<div class='ann' style='left:616.5px;top:408.6px'>Số
lượng
phụ
lục</div>
<div class='ann' style='left:735.8px;top:408px'>Số
lượng
đã
xuất</div>
<div class='ann' style='left:878.6px;top:403.4px'>Số
lượng
xuất
cho
hoá đơn
này,
NSD có
thể nhập
tay trực
tiếp</div>
</body></html>
